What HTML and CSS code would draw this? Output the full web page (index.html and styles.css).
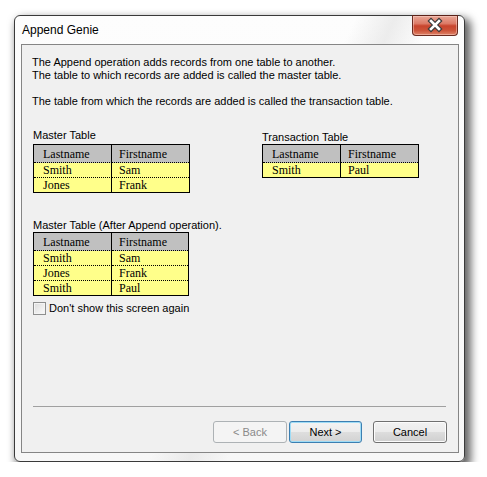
FILE: index.html
```html
<!DOCTYPE html>
<html>
<head>
<meta charset="utf-8">
<link rel="stylesheet" href="styles.css">
</head>
<body>
<div class="window">
  <div class="titlebar">
    <span class="title">Append Genie</span>
    <div class="close">
      <svg width="44" height="19" viewBox="0 0 44 19">
        <path d="M18 5 L26 13 M26 5 L18 13" stroke="#3b3b3b" stroke-width="5" stroke-linecap="square" fill="none"/>
        <path d="M18 5 L26 13 M26 5 L18 13" stroke="#ffffff" stroke-width="2.6" stroke-linecap="square" fill="none"/>
      </svg>
    </div>
  </div>
  <div class="client">
    <div class="intro">
      <div>The Append operation adds records from one table to another.</div>
      <div>The table to which records are added is called the master table.</div>
      <div class="gap">The table from which the records are added is called the transaction table.</div>
    </div>
    <div class="tables-row">
      <div class="group">
        <div class="label master-label">Master Table</div>
        <div class="grid">
          <div class="cell head c1">Lastname</div><div class="cell head">Firstname</div>
          <div class="cell data c1">Smith</div><div class="cell data">Sam</div>
          <div class="cell data c1 last">Jones</div><div class="cell data last">Frank</div>
        </div>
      </div>
      <div class="group">
        <div class="label trans-label">Transaction Table</div>
        <div class="grid">
          <div class="cell head c1">Lastname</div><div class="cell head">Firstname</div>
          <div class="cell data c1 last">Smith</div><div class="cell data last">Paul</div>
        </div>
      </div>
    </div>
    <div class="group after">
      <div class="label after-label">Master Table (After Append operation).</div>
      <div class="grid narrow">
        <div class="cell head c1">Lastname</div><div class="cell head">Firstname</div>
        <div class="cell data c1">Smith</div><div class="cell data">Sam</div>
        <div class="cell data c1">Jones</div><div class="cell data">Frank</div>
        <div class="cell data c1 last">Smith</div><div class="cell data last">Paul</div>
      </div>
    </div>
    <label class="check"><span class="box"></span><span>Don't show this screen again</span></label>
    <div class="footer">
      <div class="sep"></div>
      <div class="buttons">
        <div class="btn disabled">&lt; Back</div>
        <div class="btn default">Next &gt;</div>
        <div class="btn cancel">Cancel</div>
      </div>
    </div>
  </div>
</div>
</body>
</html>
```
FILE: styles.css
```css
html, body {
  margin: 0;
  padding: 0;
  background: #ffffff;
}
body {
  font-family: "Liberation Sans", Arial, sans-serif;
  font-size: 11px;
  color: #000;
}
.window {
  box-sizing: border-box;
  width: 451px;
  height: 447px;
  margin: 15px 0 0 14px;
  border: 1px solid #3a3a3a;
  border-radius: 6px;
  background:
    linear-gradient(115deg, rgba(255,255,255,0) 52%, rgba(225,225,225,0.6) 58%, rgba(255,255,255,0) 64%),
    linear-gradient(180deg, #fdfdfd 0%, #f7f7f7 100%);
  box-shadow: 4px 5px 9px 2px rgba(0,0,0,0.6);
  display: flex;
  flex-direction: column;
}
.titlebar {
  height: 28px;
  display: flex;
  justify-content: space-between;
  align-items: flex-start;
}
.title {
  font-size: 12px;
  line-height: 28px;
  padding-left: 7px;
  color: #000;
}
.close {
  box-sizing: border-box;
  width: 46px;
  height: 21px;
  margin-top: -1px;
  margin-right: 6px;
  border: 1px solid #6b2a1f;
  border-top-color: #5a2219;
  border-radius: 0 0 4px 4px;
  background: linear-gradient(180deg, #e9a797 0%, #dc7a66 40%, #c8442d 52%, #cc5238 75%, #df8468 100%);
  box-shadow: inset 0 0 0 1px rgba(255,220,210,0.45);
  display: flex;
}
.client {
  box-sizing: border-box;
  height: 409px;
  margin: 0 5px 8px 6px;
  border: 1px solid #858585;
  background: #f0f0f0;
  display: flex;
  flex-direction: column;
}
.intro {
  padding: 11px 0 0 10px;
  line-height: 13px;
}
.intro .gap {
  margin-top: 13px;
}
.tables-row {
  display: flex;
  gap: 72px;
  margin-top: 21px;
  padding-left: 11px;
}
.label {
  line-height: 13px;
  height: 13px;
}
.master-label {
  margin-bottom: 2px;
}
.trans-label {
  padding-top: 2px;
  margin-bottom: 0;
}
.after {
  margin-top: 26px;
  padding-left: 11px;
}
.after-label {
  margin-bottom: 0;
}
.grid {
  display: grid;
  grid-template-columns: 78px 77px;
  width: max-content;
  border: 1px solid #000;
  font-family: "Liberation Serif", "Times New Roman", serif;
  font-size: 12px;
}
.grid.narrow {
  grid-template-columns: 78px 76px;
}
.cell {
  padding-left: 9px;
  box-sizing: border-box;
}
.c1 {
  border-right: 1px solid #000;
}
.cell + .cell:not(.c1) {
  padding-left: 7px;
}
.head {
  height: 18px;
  line-height: 18px;
  background: #c0c0c0;
  border-bottom: 1px dotted #000;
}
.data {
  height: 15px;
  line-height: 15px;
  background: #ffff8a;
  border-bottom: 1px dotted #000;
}
.data.last {
  height: 14px;
  border-bottom: none;
}
.check {
  display: flex;
  align-items: center;
  gap: 3px;
  margin: 6px 0 0 11px;
  line-height: 13px;
}
.box {
  box-sizing: border-box;
  width: 13px;
  height: 13px;
  border: 1px solid #8e8f8f;
  background: linear-gradient(135deg, #dcdcdc 0%, #f2f2f2 70%, #fbfbfb 100%);
  box-shadow: inset 0 0 0 1px #f4f4f4;
}
.footer {
  margin-top: auto;
  padding-bottom: 9px;
}
.sep {
  height: 1px;
  background: #a0a0a0;
  margin: 0 12px 14px 11px;
}
.buttons {
  display: flex;
  justify-content: flex-end;
  padding-right: 11px;
}
.btn {
  box-sizing: border-box;
  width: 74px;
  height: 22px;
  border: 1px solid #707070;
  border-radius: 3px;
  background: linear-gradient(180deg, #f2f2f2 0%, #ebebeb 50%, #dddddd 51%, #cfcfcf 100%);
  box-shadow: inset 0 0 0 1px #fcfcfc;
  display: flex;
  align-items: center;
  justify-content: center;
  line-height: 20px;
}
.btn.disabled {
  color: #8a8a8a;
  border-color: #adb2b5;
  background: #f4f4f4;
  box-shadow: none;
}
.btn.default {
  width: 73px;
  margin-left: 2px;
  border-color: #3c7fb1;
  background: linear-gradient(180deg, #f3f3f3 0%, #ececec 50%, #dedede 51%, #d2d2d2 100%);
  box-shadow: inset 0 0 0 1px #9fdcf6;
}
.btn.cancel {
  margin-left: 11px;
}
```
